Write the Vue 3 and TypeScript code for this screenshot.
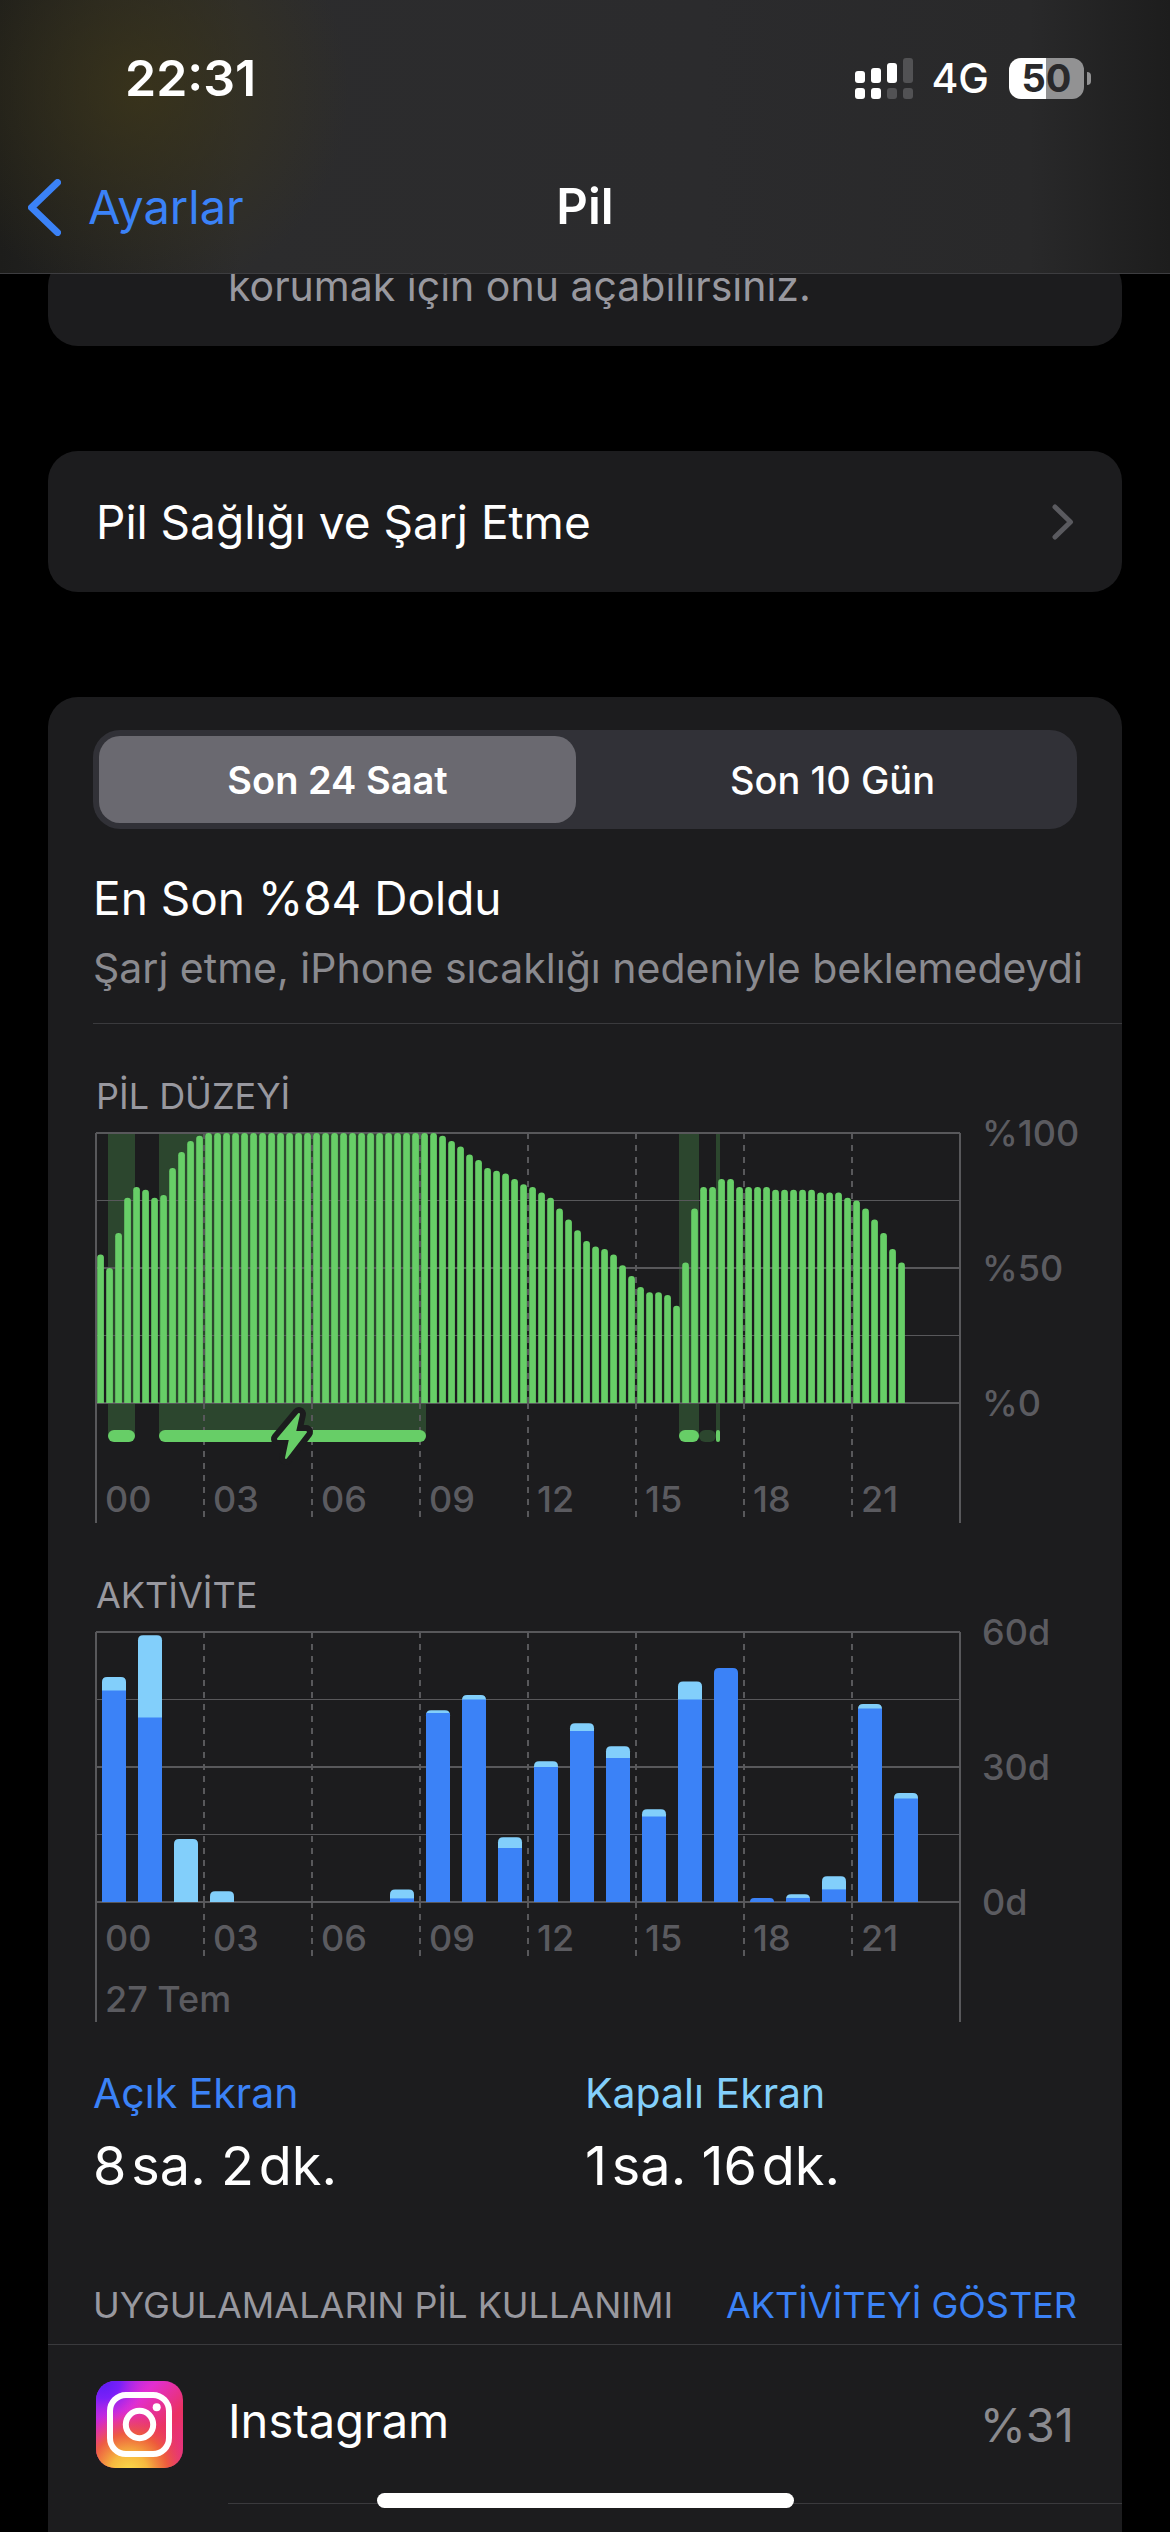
<script setup lang="ts">
import { ref } from 'vue'

interface Tick {
  value: number
  label: string
}

interface HourUsage {
  hour: number
  on: number
  total: number
}

const PLOT_W = 864
const PLOT_H = 270
const FOOT = 390

const range = ref<'day' | 'tenDays'>('day')

const hours = ['00', '03', '06', '09', '12', '15', '18', '21']
const levelTicks: Tick[] = [
  { value: 1, label: '%100' },
  { value: 0.5, label: '%50' },
  { value: 0, label: '%0' },
]
const activityTicks: Tick[] = [
  { value: 1, label: '60d' },
  { value: 0.5, label: '30d' },
  { value: 0, label: '0d' },
]

// Battery percentage for every quarter of an hour
const levels: number[] = [
  55, 50, 63, 76, 80, 79, 76, 77, 87, 93, 97, 99,
  ...Array<number>(26).fill(100),
  99, 97, 95, 92, 90, 87, 86, 85, 83, 81, 80, 78, 76, 72, 68, 64,
  60, 58, 57, 55, 51, 47, 43, 41, 41, 40, 36, 52, 72, 80, 80, 83,
  83, 80, 80, 80, 80, 79, 79, 79, 79, 79, 78, 78, 78, 76, 75, 72,
  68, 63, 57, 52,
]

const charging = [
  { x: 12, w: 27 },
  { x: 63, w: 267 },
  { x: 583, w: 20 },
  { x: 620, w: 4 },
]

const usage: HourUsage[] = [
  { hour: 0, on: 47, total: 50 },
  { hour: 1, on: 41, total: 59.3 },
  { hour: 2, on: 0, total: 14 },
  { hour: 3, on: 0, total: 2.4 },
  { hour: 8, on: 0.8, total: 2.8 },
  { hour: 9, on: 42, total: 42.6 },
  { hour: 10, on: 45, total: 46 },
  { hour: 11, on: 12, total: 14.4 },
  { hour: 12, on: 30, total: 31.3 },
  { hour: 13, on: 38, total: 39.7 },
  { hour: 14, on: 32, total: 34.6 },
  { hour: 15, on: 19, total: 20.6 },
  { hour: 16, on: 45, total: 49 },
  { hour: 17, on: 52, total: 52 },
  { hour: 18, on: 0.9, total: 0.9 },
  { hour: 19, on: 0.9, total: 1.7 },
  { hour: 20, on: 2.8, total: 5.7 },
  { hour: 21, on: 43, total: 44 },
  { hour: 22, on: 23, total: 24.2 },
]

// Column with rounded top corners, standing on the zero line
function column(x: number, w: number, h: number, r: number): string {
  const top = PLOT_H - h
  const c = Math.min(r, h, w / 2)
  return `M${x} ${PLOT_H}V${top + c}q0 ${-c} ${c} ${-c}h${w - 2 * c}q${c} 0 ${c} ${c}V${PLOT_H}z`
}

const levelBars = levels.map((v, i) => column(i * 9 + 1.2, 6.7, v * 2.7, 3.3))
const activityBars = usage.map((u) => ({
  hour: u.hour,
  total: column(u.hour * 36 + 6, 24, u.total * 4.5, 5),
  x: u.hour * 36 + 6,
  y: PLOT_H - u.on * 4.5,
  h: u.on * 4.5,
  onlyOn: u.on === u.total,
}))
</script>

<template>
  <div class="screen">
    <header class="header">
      <div class="status">
        <span class="time">22:31</span>
        <div class="indicators">
          <svg class="signal" viewBox="0 0 58 41" aria-hidden="true">
            <g fill="#fff">
              <rect x="0" y="13" width="10" height="12" rx="3" />
              <rect x="16" y="10" width="10" height="15" rx="3" />
              <rect x="32" y="5" width="10" height="20" rx="3" />
              <rect x="0" y="30" width="10" height="11" rx="3" />
              <rect x="16" y="30" width="10" height="11" rx="3" />
            </g>
            <g fill="#525254">
              <rect x="48" y="0" width="10" height="25" rx="3" />
              <rect x="32" y="30" width="10" height="11" rx="3" />
              <rect x="48" y="30" width="10" height="11" rx="3" />
            </g>
          </svg>
          <span class="network">4G</span>
          <div class="battery">
            <span class="battery-body">50</span>
            <span class="battery-cap"></span>
          </div>
        </div>
      </div>
      <nav class="nav">
        <a class="back" href="#">
          <svg class="back-icon" viewBox="0 0 33 57" aria-hidden="true">
            <path d="M29.500 3.500L3.500 28.500L29.500 53.500" fill="none" stroke="#3b82f7" stroke-width="7" stroke-linecap="round" stroke-linejoin="round" />
          </svg>
          <span>Ayarlar</span>
        </a>
        <h1 class="title">Pil</h1>
      </nav>
    </header>

    <main class="content">
      <section class="card note">
        <p>korumak için onu açabilirsiniz.</p>
      </section>

      <a class="card link-row" href="#">
        <span>Pil Sağlığı ve Şarj Etme</span>
        <svg class="chevron" viewBox="0 0 22 36" aria-hidden="true">
          <path d="M3 3L18.500 18L3 33" fill="none" stroke="#5a5a5f" stroke-width="5" stroke-linecap="round" stroke-linejoin="round" />
        </svg>
      </a>

      <section class="card stats">
        <div class="segments">
          <button type="button" :class="{ active: range === 'day' }" :aria-pressed="range === 'day'" @click="range = 'day'">Son 24 Saat</button>
          <button type="button" :class="{ active: range === 'tenDays' }" :aria-pressed="range === 'tenDays'" @click="range = 'tenDays'">Son 10 Gün</button>
        </div>

        <div class="summary">
          <h2>En Son %84 Doldu</h2>
          <p>Şarj etme, iPhone sıcaklığı nedeniyle beklemedeydi</p>
        </div>

        <div class="chart">
          <h3>PİL DÜZEYİ</h3>
          <svg class="plot" viewBox="-3 -1 984 391" role="img" aria-label="Pil düzeyi">
            <g class="bands">
              <rect v-for="c in charging" :key="c.x" :x="c.x" y="0" :width="c.w" height="303" />
            </g>
            <g class="lines">
              <path v-for="n in 5" :key="n" :d="`M0 ${(n - 1) * 67.5}H${PLOT_W}`" :stroke-width="n % 2 ? 2 : 1" />
              <path :d="`M0 0V${FOOT}M${PLOT_W} 0V${FOOT}`" />
              <path v-for="n in 7" :key="'d' + n" class="dashed" :d="`M${n * 108} 0V${PLOT_H}M${n * 108} ${PLOT_H}V384`" />
            </g>
            <path v-for="(d, i) in levelBars" :key="i" :d="d" class="green" />
            <rect class="band-pill" x="603" y="297" width="17" height="12" rx="6" />
            <rect v-for="c in charging" :key="'p' + c.x" class="green" :x="c.x" y="297" :width="c.w" height="12" :rx="Math.min(6, c.w / 2)" />
            <path class="bolt-edge" d="M203 281L182 306H194L190 325L210 299H199Z" />
            <path class="bolt" d="M203 281L182 306H194L190 325L210 299H199Z" />
            <g class="labels">
              <text v-for="(h, i) in hours" :key="h" :x="i * 108 + 9" y="379">{{ h }}</text>
              <text v-for="t in levelTicks" :key="t.label" x="886" :y="(1 - t.value) * PLOT_H + 13">{{ t.label }}</text>
            </g>
          </svg>
        </div>

        <div class="chart">
          <h3>AKTİVİTE</h3>
          <svg class="plot" viewBox="-3 -1 984 391" role="img" aria-label="Aktivite">
            <g class="lines">
              <path v-for="n in 5" :key="n" :d="`M0 ${(n - 1) * 67.5}H${PLOT_W}`" :stroke-width="n % 2 ? 2 : 1" />
              <path :d="`M0 0V${FOOT}M${PLOT_W} 0V${FOOT}`" />
              <path v-for="n in 7" :key="'d' + n" class="dashed" :d="`M${n * 108} 0V${PLOT_H}M${n * 108} ${PLOT_H}V324`" />
            </g>
            <g v-for="b in activityBars" :key="b.hour">
              <path :d="b.total" :class="b.onlyOn ? 'blue' : 'sky'" />
              <rect v-if="!b.onlyOn && b.h > 0" class="blue" :x="b.x" :y="b.y" width="24" :height="b.h" />
            </g>
            <g class="labels">
              <text v-for="(h, i) in hours" :key="h" :x="i * 108 + 9" y="319">{{ h }}</text>
              <text x="9" y="380">27 Tem</text>
              <text v-for="t in activityTicks" :key="t.label" x="886" :y="(1 - t.value) * PLOT_H + 13">{{ t.label }}</text>
            </g>
          </svg>
        </div>

        <dl class="totals">
          <div>
            <dt class="on">Açık Ekran</dt>
            <dd>8&#8202;sa. 2&#8202;dk.</dd>
          </div>
          <div>
            <dt class="off">Kapalı Ekran</dt>
            <dd>1&#8202;sa. 16&#8202;dk.</dd>
          </div>
        </dl>

        <div class="list-head">
          <h3>UYGULAMALARIN PİL KULLANIMI</h3>
          <button type="button">AKTİVİTEYİ GÖSTER</button>
        </div>

        <ul class="apps">
          <li>
            <svg class="app-icon" viewBox="0 0 87 87" aria-hidden="true">
              <defs>
                <linearGradient id="ig-base" x1="0" y1="0" x2="1" y2="1">
                  <stop offset="0" stop-color="#8a1ff5" />
                  <stop offset="0.35" stop-color="#e22fd0" />
                  <stop offset="0.65" stop-color="#ea3263" />
                  <stop offset="1" stop-color="#e4338f" />
                </linearGradient>
                <radialGradient id="ig-warm" cx="0.38" cy="1.05" r="0.72">
                  <stop offset="0" stop-color="#fbdd4b" />
                  <stop offset="0.3" stop-color="#f6b83f" />
                  <stop offset="0.62" stop-color="#ee6136" stop-opacity="0.9" />
                  <stop offset="1" stop-color="#ea3263" stop-opacity="0" />
                </radialGradient>
                <radialGradient id="ig-cool" cx="0.08" cy="0" r="0.5">
                  <stop offset="0" stop-color="#5a1cf5" />
                  <stop offset="0.4" stop-color="#7a20f8" />
                  <stop offset="1" stop-color="#d030e0" stop-opacity="0" />
                </radialGradient>
              </defs>
              <rect width="87" height="87" rx="19" fill="url(#ig-base)" />
              <rect width="87" height="87" rx="19" fill="url(#ig-warm)" />
              <rect width="87" height="87" rx="19" fill="url(#ig-cool)" />
              <g fill="none" stroke="#fff" stroke-width="6">
                <rect x="14" y="14" width="59" height="59" rx="16" />
                <circle cx="43.500" cy="43.500" r="13.700" />
              </g>
              <circle cx="60.700" cy="26.300" r="4" fill="#fff" />
            </svg>
            <div class="app-body">
              <span class="app-name">Instagram</span>
              <span class="app-share">%31</span>
            </div>
          </li>
        </ul>
      </section>
    </main>

    <div class="home-indicator"></div>
  </div>
</template>

<style>
body {
  background: #000;
}
</style>

<style scoped>
.screen {
  height: 100vh;
  overflow: hidden;
  background: #000;
  color: #fff;
  font-family: Inter, "Liberation Sans", sans-serif;
}

h1, h2, h3, p, ul, dl, dd {
  margin: 0;
  padding: 0;
  font-weight: 400;
}

a {
  color: inherit;
  text-decoration: none;
}

button {
  border: 0;
  padding: 0;
  background: none;
  color: inherit;
  font: inherit;
}

svg {
  display: block;
}

.header {
  position: relative;
  z-index: 1;
  border-bottom: 1px solid #3d3d40;
  background:
    radial-gradient(circle at 140px 90px, rgba(62, 55, 24, 0.75), rgba(62, 55, 24, 0) 210px),
    linear-gradient(90deg, #1d1d1b 0, #2c2c2d 240px, #2b2b2d 60%, #29292a 88%, #1d1d1d 100%);
}

.status {
  display: flex;
  align-items: center;
  justify-content: space-between;
  padding: 48px 79px 33px 125px;
}

.time {
  font-size: 50px;
  line-height: 60px;
  font-weight: 600;
}

.indicators {
  display: flex;
  align-items: center;
}

.signal {
  width: 58px;
  height: 41px;
}

.network {
  margin: 0 20px 0 18px;
  font-size: 41px;
  line-height: 60px;
  font-weight: 500;
}

.battery {
  display: flex;
  align-items: center;
  gap: 3px;
}

.battery-body {
  width: 75px;
  border-radius: 12px;
  background: linear-gradient(90deg, #fff 50%, #929293 50%);
  color: #29292b;
  font-size: 38px;
  line-height: 41px;
  font-weight: 700;
  text-align: center;
}

.battery-cap {
  width: 4px;
  height: 13px;
  border-radius: 0 4px 4px 0;
  background: #929293;
}

.nav {
  display: grid;
  grid-template-columns: 1fr auto 1fr;
  align-items: center;
  height: 132px;
  padding: 0 28px;
}

.back {
  display: flex;
  align-items: center;
  gap: 27px;
  color: #3b82f7;
  font-size: 47px;
  line-height: 60px;
}

.back-icon {
  width: 33px;
  height: 57px;
}

.title {
  font-size: 49px;
  line-height: 60px;
  font-weight: 600;
}

.content {
  display: flex;
  flex-direction: column;
  gap: 105px;
  margin-top: -18px;
  padding: 0 48px;
}

.card {
  border-radius: 30px;
  background: #1c1c1e;
}

.note {
  padding: 0 48px 30px 180px;
  color: #98989f;
  font-size: 41px;
  line-height: 60px;
}

.link-row {
  display: flex;
  align-items: center;
  justify-content: space-between;
  height: 141px;
  padding: 0 48px;
  font-size: 46px;
  line-height: 60px;
}

.chevron {
  width: 22px;
  height: 36px;
}

.stats {
  padding: 33px 0 96px 45px;
}

.segments {
  display: grid;
  grid-template-columns: 1fr 1fr;
  gap: 18px;
  margin-right: 45px;
  padding: 6px;
  border-radius: 27px;
  background: #313137;
}

.segments button {
  height: 87px;
  border-radius: 21px;
  font-size: 38px;
  font-weight: 500;
}

.segments .active {
  background: #6a6970;
  font-weight: 600;
}

.summary {
  padding: 39px 0 25px;
  border-bottom: 1px solid #3a3a3d;
}

.summary h2 {
  font-size: 46px;
  line-height: 60px;
}

.summary p {
  margin-top: 10px;
  color: #8a8a8f;
  font-size: 41px;
  line-height: 60px;
  white-space: nowrap;
}

.chart {
  margin: 48px 45px 0 0;
}

.chart h3,
.list-head {
  color: #98989f;
  font-size: 36px;
  line-height: 48px;
}

.list-head h3 {
  font-size: 36px;
}

.chart h3 {
  padding-left: 3px;
}

.plot {
  width: 100%;
  margin-top: 12px;
  overflow: visible;
}

.lines {
  fill: none;
  stroke: #58585b;
  stroke-width: 2;
}

.dashed {
  stroke-dasharray: 6 6;
}

.bands,
.band-pill {
  fill: #2c462e;
}

.green {
  fill: #67ce67;
}

.blue {
  fill: #3b82f7;
}

.sky {
  fill: #82cffb;
}

.bolt {
  fill: #67ce67;
  stroke: #67ce67;
  stroke-width: 2;
  stroke-linejoin: round;
}

.bolt-edge {
  fill: #1c1c1e;
  stroke: #1c1c1e;
  stroke-width: 14;
  stroke-linejoin: round;
}

.labels {
  fill: #5b5b60;
  font-size: 36px;
  font-weight: 500;
}

.totals {
  display: grid;
  grid-template-columns: 1fr 1fr;
  margin: 44px 45px 0 0;
}

.totals dt {
  font-size: 41px;
  line-height: 54px;
}

.totals dd {
  margin-top: 13px;
  font-size: 54px;
  line-height: 66px;
}

.on {
  color: #3b82f7;
}

.off {
  color: #82cffb;
}

.list-head {
  display: flex;
  justify-content: space-between;
  margin: 82px 0 0 -45px;
  padding: 0 45px 15px;
  border-bottom: 1px solid #3a3a3d;
}

.list-head button {
  color: #3b82f7;
}

.apps {
  list-style: none;
}

.apps li {
  display: flex;
  align-items: center;
  gap: 45px;
  padding-left: 3px;
}

.app-icon {
  width: 87px;
  height: 87px;
}

.app-body {
  display: flex;
  flex: 1;
  align-items: center;
  justify-content: space-between;
  height: 158px;
  padding-right: 48px;
  border-bottom: 1px solid #3a3a3d;
  font-size: 47px;
}

.app-name {
  padding-bottom: 8px;
}

.app-share {
  color: #8a8a8f;
}

.home-indicator {
  position: fixed;
  bottom: 24px;
  left: 50%;
  z-index: 2;
  width: 417px;
  height: 15px;
  margin-left: -208px;
  border-radius: 8px;
  background: #fff;
}
</style>
